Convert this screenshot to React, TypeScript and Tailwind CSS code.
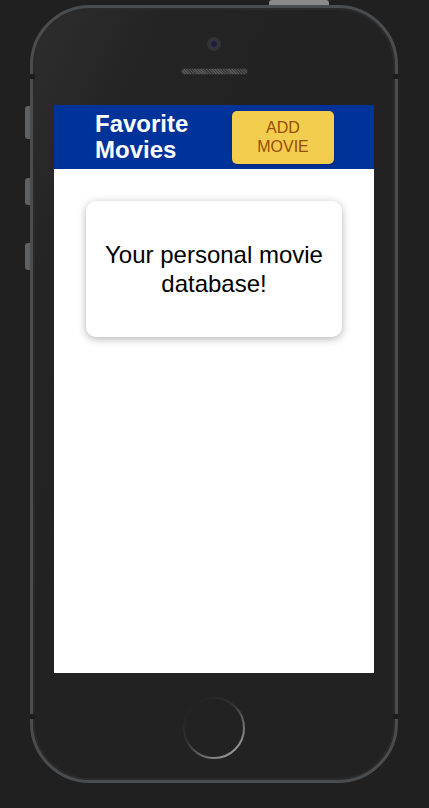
import React from "react";

export default function App() {
  return (
    <div className="w-[429px] h-[808px] bg-[#202021] pt-[5px] pl-[30px] overflow-hidden" style={{ fontFamily: '"Liberation Sans", Arial, sans-serif' }}>
      <div className="relative w-[368px] h-[778px]">
        {/* top power button */}
        <div className="absolute left-[239px] top-[-5px] w-[60px] h-[6px] rounded-t-[3px] bg-[#8a8a8b]" />
        {/* side buttons */}
        <div className="absolute left-[-5px] top-[101px] w-[5px] h-[33px] rounded-l-[3px] bg-[#5f6062]" />
        <div className="absolute left-[-5px] top-[173px] w-[5px] h-[27px] rounded-l-[3px] bg-[#5f6062]" />
        <div className="absolute left-[-5px] top-[238px] w-[5px] h-[27px] rounded-l-[3px] bg-[#5f6062]" />
        {/* body */}
        <div className="relative w-[368px] h-[778px] rounded-[60px] border-[3px] border-[#4a4d4f] bg-[linear-gradient(115deg,#2e2e2e_0%,#242424_18%,#222222_40%,#222222_100%)] flex flex-col items-center shadow-[inset_0_0_0_2px_#2a2a2a]">
          {/* frame notches */}
          <div className="absolute left-[-3px] top-[66px] w-[5px] h-[5px] bg-[#1c1c1c]" />
          <div className="absolute right-[-3px] top-[66px] w-[5px] h-[5px] bg-[#1c1c1c]" />
          <div className="absolute left-[-3px] top-[706px] w-[5px] h-[5px] bg-[#1c1c1c]" />
          <div className="absolute right-[-3px] top-[706px] w-[5px] h-[5px] bg-[#1c1c1c]" />
          {/* camera */}
          <div className="mt-[29px] w-[14px] h-[14px] rounded-full bg-[#333336] flex items-center justify-center">
            <div className="w-[8px] h-[8px] rounded-full bg-[#1d1d33] shadow-[inset_0_0_2px_#5a5a80]" />
          </div>
          {/* speaker */}
          <div className="mt-[17px] w-[67px] h-[7px] rounded-full bg-[#4d4d4d] border border-[#2e2e2e] bg-[repeating-linear-gradient(45deg,#555_0px,#555_1px,#3a3a3a_1px,#3a3a3a_2px)]" />
          {/* screen */}
          <div className="mt-[30px] w-[320px] h-[568px] bg-white flex flex-col">
            <div className="h-[64px] bg-[#003399] flex items-center justify-between pl-[41px] pr-[40px]">
              <div className="text-white font-bold text-[24px] leading-[26px]">
                Favorite
                <br />
                Movies
              </div>
              <button className="w-[102px] h-[53px] rounded-[5px] bg-[#f2cd4e] text-[#9a4c04] text-[16px] leading-[19px] shadow-[0_1px_4px_rgba(0,0,0,0.25)] flex items-center justify-center text-center">
                ADD
                <br />
                MOVIE
              </button>
            </div>
            <div className="mx-[32px] mt-[32px] h-[136px] rounded-[10px] bg-white shadow-[0_2px_8px_rgba(0,0,0,0.3)] flex items-center justify-center text-center text-black text-[24px] leading-[29px] px-[6px]">
              Your personal movie database!
            </div>
          </div>
          {/* home button */}
          <div className="mt-[23px]">
            <svg width="64" height="64" viewBox="0 0 64 64">
              <defs>
                <linearGradient id="hb" x1="0.15" y1="0.1" x2="0.85" y2="0.95">
                  <stop offset="0%" stopColor="#222" />
                  <stop offset="40%" stopColor="#333" />
                  <stop offset="100%" stopColor="#a0a0a0" />
                </linearGradient>
              </defs>
              <circle cx="32" cy="32" r="30" fill="#222" stroke="url(#hb)" strokeWidth="2" />
            </svg>
          </div>
        </div>
      </div>
    </div>
  );
}
